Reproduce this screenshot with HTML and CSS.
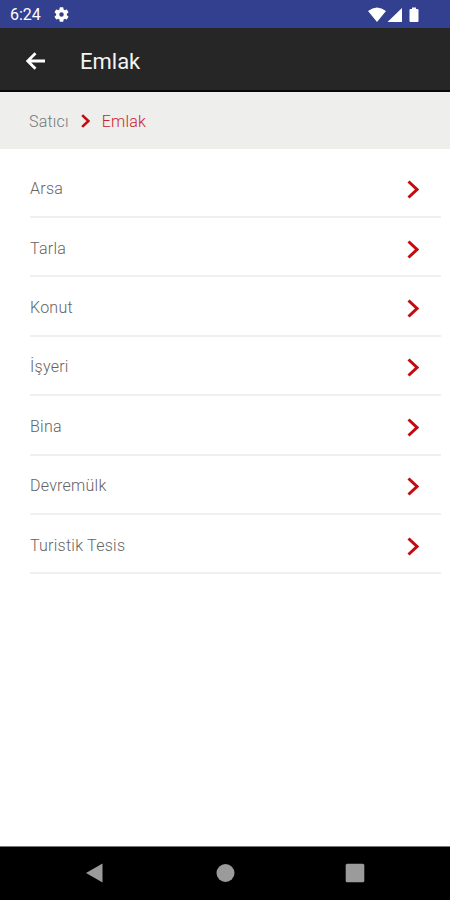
FILE: index.html
```html
<!DOCTYPE html>
<html lang="tr">
<head>
<meta charset="utf-8">
<title>Emlak</title>
<link rel="stylesheet" href="styles.css">
</head>
<body>
<div class="screen">
  <div class="status">
    <span class="time">6:24</span>
    <svg class="gear" viewBox="2 2 20 20"><path fill-rule="evenodd" d="M19.14 12.94a7 7 0 0 0 0-1.88l2.03-1.58a.5.5 0 0 0 .12-.61l-1.92-3.32a.5.5 0 0 0-.59-.22l-2.39.96a7 7 0 0 0-1.62-.94l-.36-2.54a.5.5 0 0 0-.48-.41h-3.84a.5.5 0 0 0-.47.41l-.36 2.54a7 7 0 0 0-1.63.94l-2.39-.96a.5.5 0 0 0-.59.22L2.74 8.87a.5.5 0 0 0 .12.61l2.03 1.58a7 7 0 0 0 0 1.88l-2.03 1.58a.5.5 0 0 0-.12.61l1.92 3.32c.12.22.37.29.59.22l2.39-.96c.5.38 1.03.7 1.62.94l.36 2.54c.05.24.24.41.48.41h3.84c.24 0 .44-.17.47-.41l.36-2.54a7 7 0 0 0 1.63-.94l2.39.96c.22.08.47 0 .59-.22l1.92-3.32a.5.5 0 0 0-.12-.61zM12 15a3 3 0 1 1 0-6 3 3 0 0 1 0 6z"/></svg>
    <svg class="signals" viewBox="0 0 54 16"><path d="M0 4Q9-3 18 4L9 15zM34 1v14H19.500zM42.500 2H44V.5h4V2h1.500q1 0 1 1v11q0 1-1 1h-7q-1 0-1-1V3q0-1 1-1z"/></svg>
  </div>
  <header class="appbar">
    <svg class="back" viewBox="0 0 20 18"><path d="M19 9H2M9.500 1.200L1.700 9l7.800 7.800"/></svg>
    <h1>Emlak</h1>
  </header>
  <nav class="crumbs">
    <span>Satıcı</span>
    <svg class="chevron" viewBox="0 0 12 19"><path d="M1.500 1.500L10 9.500l-8.500 8"/></svg>
    <span class="current">Emlak</span>
  </nav>
  <ul class="list">
    <li><span>Arsa</span><svg class="chevron" viewBox="0 0 12 19"><path d="M1.500 1.500L10 9.500l-8.500 8"/></svg></li>
    <li><span>Tarla</span><svg class="chevron" viewBox="0 0 12 19"><path d="M1.500 1.500L10 9.500l-8.500 8"/></svg></li>
    <li><span>Konut</span><svg class="chevron" viewBox="0 0 12 19"><path d="M1.500 1.500L10 9.500l-8.500 8"/></svg></li>
    <li><span>İşyeri</span><svg class="chevron" viewBox="0 0 12 19"><path d="M1.500 1.500L10 9.500l-8.500 8"/></svg></li>
    <li><span>Bina</span><svg class="chevron" viewBox="0 0 12 19"><path d="M1.500 1.500L10 9.500l-8.500 8"/></svg></li>
    <li><span>Devremülk</span><svg class="chevron" viewBox="0 0 12 19"><path d="M1.500 1.500L10 9.500l-8.500 8"/></svg></li>
    <li><span>Turistik Tesis</span><svg class="chevron" viewBox="0 0 12 19"><path d="M1.500 1.500L10 9.500l-8.500 8"/></svg></li>
  </ul>
  <footer class="navbar">
    <svg viewBox="0 0 20 20"><path d="M17.500 .5v19L1 10z"/></svg>
    <svg viewBox="0 0 20 20"><circle cx="10.500" cy="10" r="9"/></svg>
    <svg viewBox="0 0 20 20"><rect x=".7" y=".7" width="18.600" height="18.600" rx="1.500"/></svg>
  </footer>
</div>
</body>
</html>
```
FILE: styles.css
```css
* { box-sizing: border-box; }
body { margin: 0; font-family: Roboto, sans-serif; background: #fff; }
.screen { height: 900px; display: flex; flex-direction: column; }
.status {
  height: 28px; flex: none; display: flex; align-items: center;
  padding: 1px 29px 0 10px; background: #33408f; color: #fff;
}
.time { font-size: 16px; line-height: 20px; }
.gear { width: 15px; height: 15px; margin-left: 13px; fill: #fff; }
.signals { width: 54px; height: 16px; margin-left: auto; margin-right: -1px; fill: #fff; }
.appbar {
  height: 64px; flex: none; display: flex; align-items: center;
  padding: 3px 26px 0; background: #262626; border-bottom: 2px solid #080808;
}
.back { width: 20px; height: 18px; fill: none; stroke: #fff; stroke-width: 2.800; }
h1 { margin: 0 0 0 34px; padding-top: 2px; font-size: 22px; font-weight: 400; line-height: 28px; color: #f4f4f4; }
.crumbs {
  height: 57px; flex: none; display: flex; align-items: center;
  padding: 1px 29px 0; background: #eeeeec; font-size: 16px; color: #777;
  font-weight: 300; letter-spacing: .2px;
}
.chevron { width: 12px; height: 19px; fill: none; stroke: #c40b10; stroke-width: 3; }
.crumbs .chevron { width: 9px; height: 14px; margin: 0 12px; stroke-width: 3.600; }
.current { color: #c9242b; }
.list { margin: 0; padding: 9.600px 9px 0 30px; list-style: none; flex: 1; }
.list li {
  height: 59.400px; display: flex; align-items: center; justify-content: space-between;
  padding: 3px 22px 0 0; border-bottom: 2px solid #f0f0f0;
  font-size: 16px; font-weight: 300; color: #646464; letter-spacing: .25px;
}
.list .chevron { margin-top: 2px; }
.navbar {
  height: 54px; flex: none; display: flex; align-items: center; justify-content: space-between;
  padding: 0 85px 2px; background: #000; border-top: 1px solid #777;
}
.navbar svg { width: 20px; height: 20px; fill: #9b9b9b; }
```
